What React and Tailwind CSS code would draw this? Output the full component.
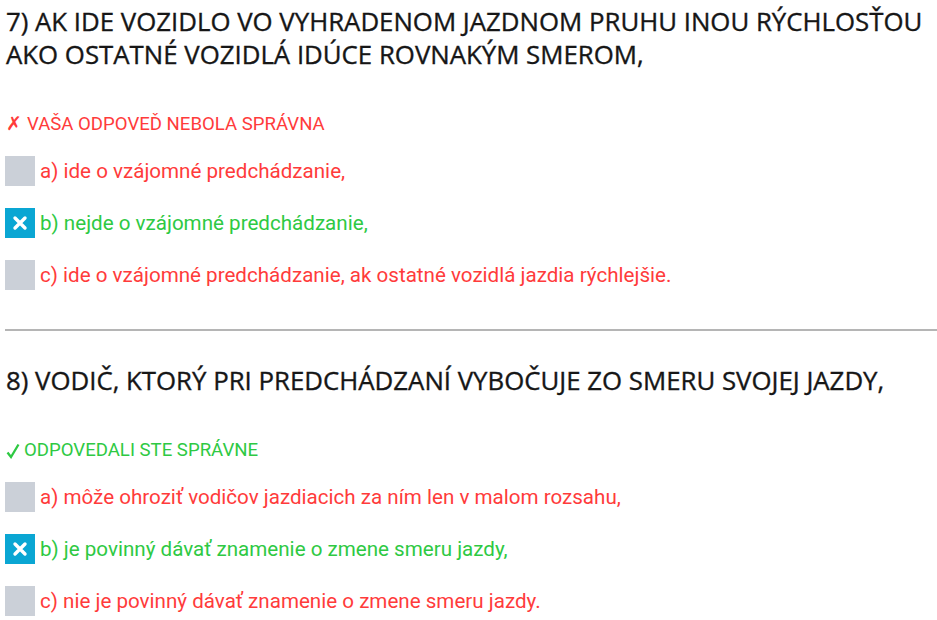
import React from 'react'

const QUESTIONS = [
  {
    id: 7,
    title: '7) Ak ide vozidlo vo vyhradenom jazdnom pruhu inou rýchlosťou ako ostatné vozidlá idúce rovnakým smerom,',
    correct: false,
    answers: [
      { text: 'a) ide o vzájomné predchádzanie,', right: false, checked: false },
      { text: 'b) nejde o vzájomné predchádzanie,', right: true, checked: true },
      { text: 'c) ide o vzájomné predchádzanie, ak ostatné vozidlá jazdia rýchlejšie.', right: false, checked: false },
    ],
  },
  {
    id: 8,
    title: '8) Vodič, ktorý pri predchádzaní vybočuje zo smeru svojej jazdy,',
    correct: true,
    answers: [
      { text: 'a) môže ohroziť vodičov jazdiacich za ním len v malom rozsahu,', right: false, checked: false },
      { text: 'b) je povinný dávať znamenie o zmene smeru jazdy,', right: true, checked: true },
      { text: 'c) nie je povinný dávať znamenie o zmene smeru jazdy.', right: false, checked: false },
    ],
  },
]

function CheckBox({ checked }) {
  if (!checked) return <div className="w-[30px] h-[30px] shrink-0 bg-[#cbd0d8]" />
  return (
    <div className="w-[30px] h-[30px] shrink-0 bg-[#0aa6d3] flex items-center justify-center">
      <svg width="16" height="16" viewBox="0 0 16 16">
        <path d="M3 3 L13 13 M13 3 L3 13" stroke="#fff" strokeWidth="3.4" strokeLinecap="round" />
      </svg>
    </div>
  )
}

function Question({ q }) {
  return (
    <div>
      <h2 className="font-['Open_Sans',sans-serif] font-normal [-webkit-text-stroke:0.35px_#161616] text-[25.8px] leading-[33px] uppercase text-[#161616] pl-[1px]">
        {q.title}
      </h2>
      <div className={`mt-[41px] h-[24px] font-['Roboto',sans-serif] text-[18.6px] leading-[24px] uppercase flex items-center ${q.correct ? 'text-[#2ec943]' : 'text-[#ff3b3b]'}`}>
        {q.correct ? (
          <>
            <svg width="14" height="16" viewBox="0 0 14 16" className="ml-[1px] mr-[4px] mt-[1px]">
              <path d="M1.5 9.5 L5 14 L12.5 1.5" fill="none" stroke="#2ec943" strokeWidth="2.3" />
            </svg>
            Odpovedali ste správne
          </>
        ) : (
          <><span className="pl-[1px] mr-[5px]">✗</span>Vaša odpoveď nebola správna</>
        )}
      </div>
      <div className="mt-[20px] flex flex-col gap-[22px]">
        {q.answers.map((a, i) => (
          <div key={i} className="flex items-center gap-[5px]">
            <CheckBox checked={a.checked} />
            <span className={`font-['Roboto',sans-serif] text-[20.6px] leading-[30px] ${a.right ? 'text-[#2ec943]' : 'text-[#ff3b3b]'}`}>
              {a.text}
            </span>
          </div>
        ))}
      </div>
    </div>
  )
}

export default function App() {
  return (
    <div className="bg-white w-[937px] h-[620px] overflow-hidden pl-[5px] pt-[5px]">
      <Question q={QUESTIONS[0]} />
      <div className="mt-[39px] mb-[33px] h-[2px] bg-[#b5b5b5]" />
      <Question q={QUESTIONS[1]} />
    </div>
  )
}
